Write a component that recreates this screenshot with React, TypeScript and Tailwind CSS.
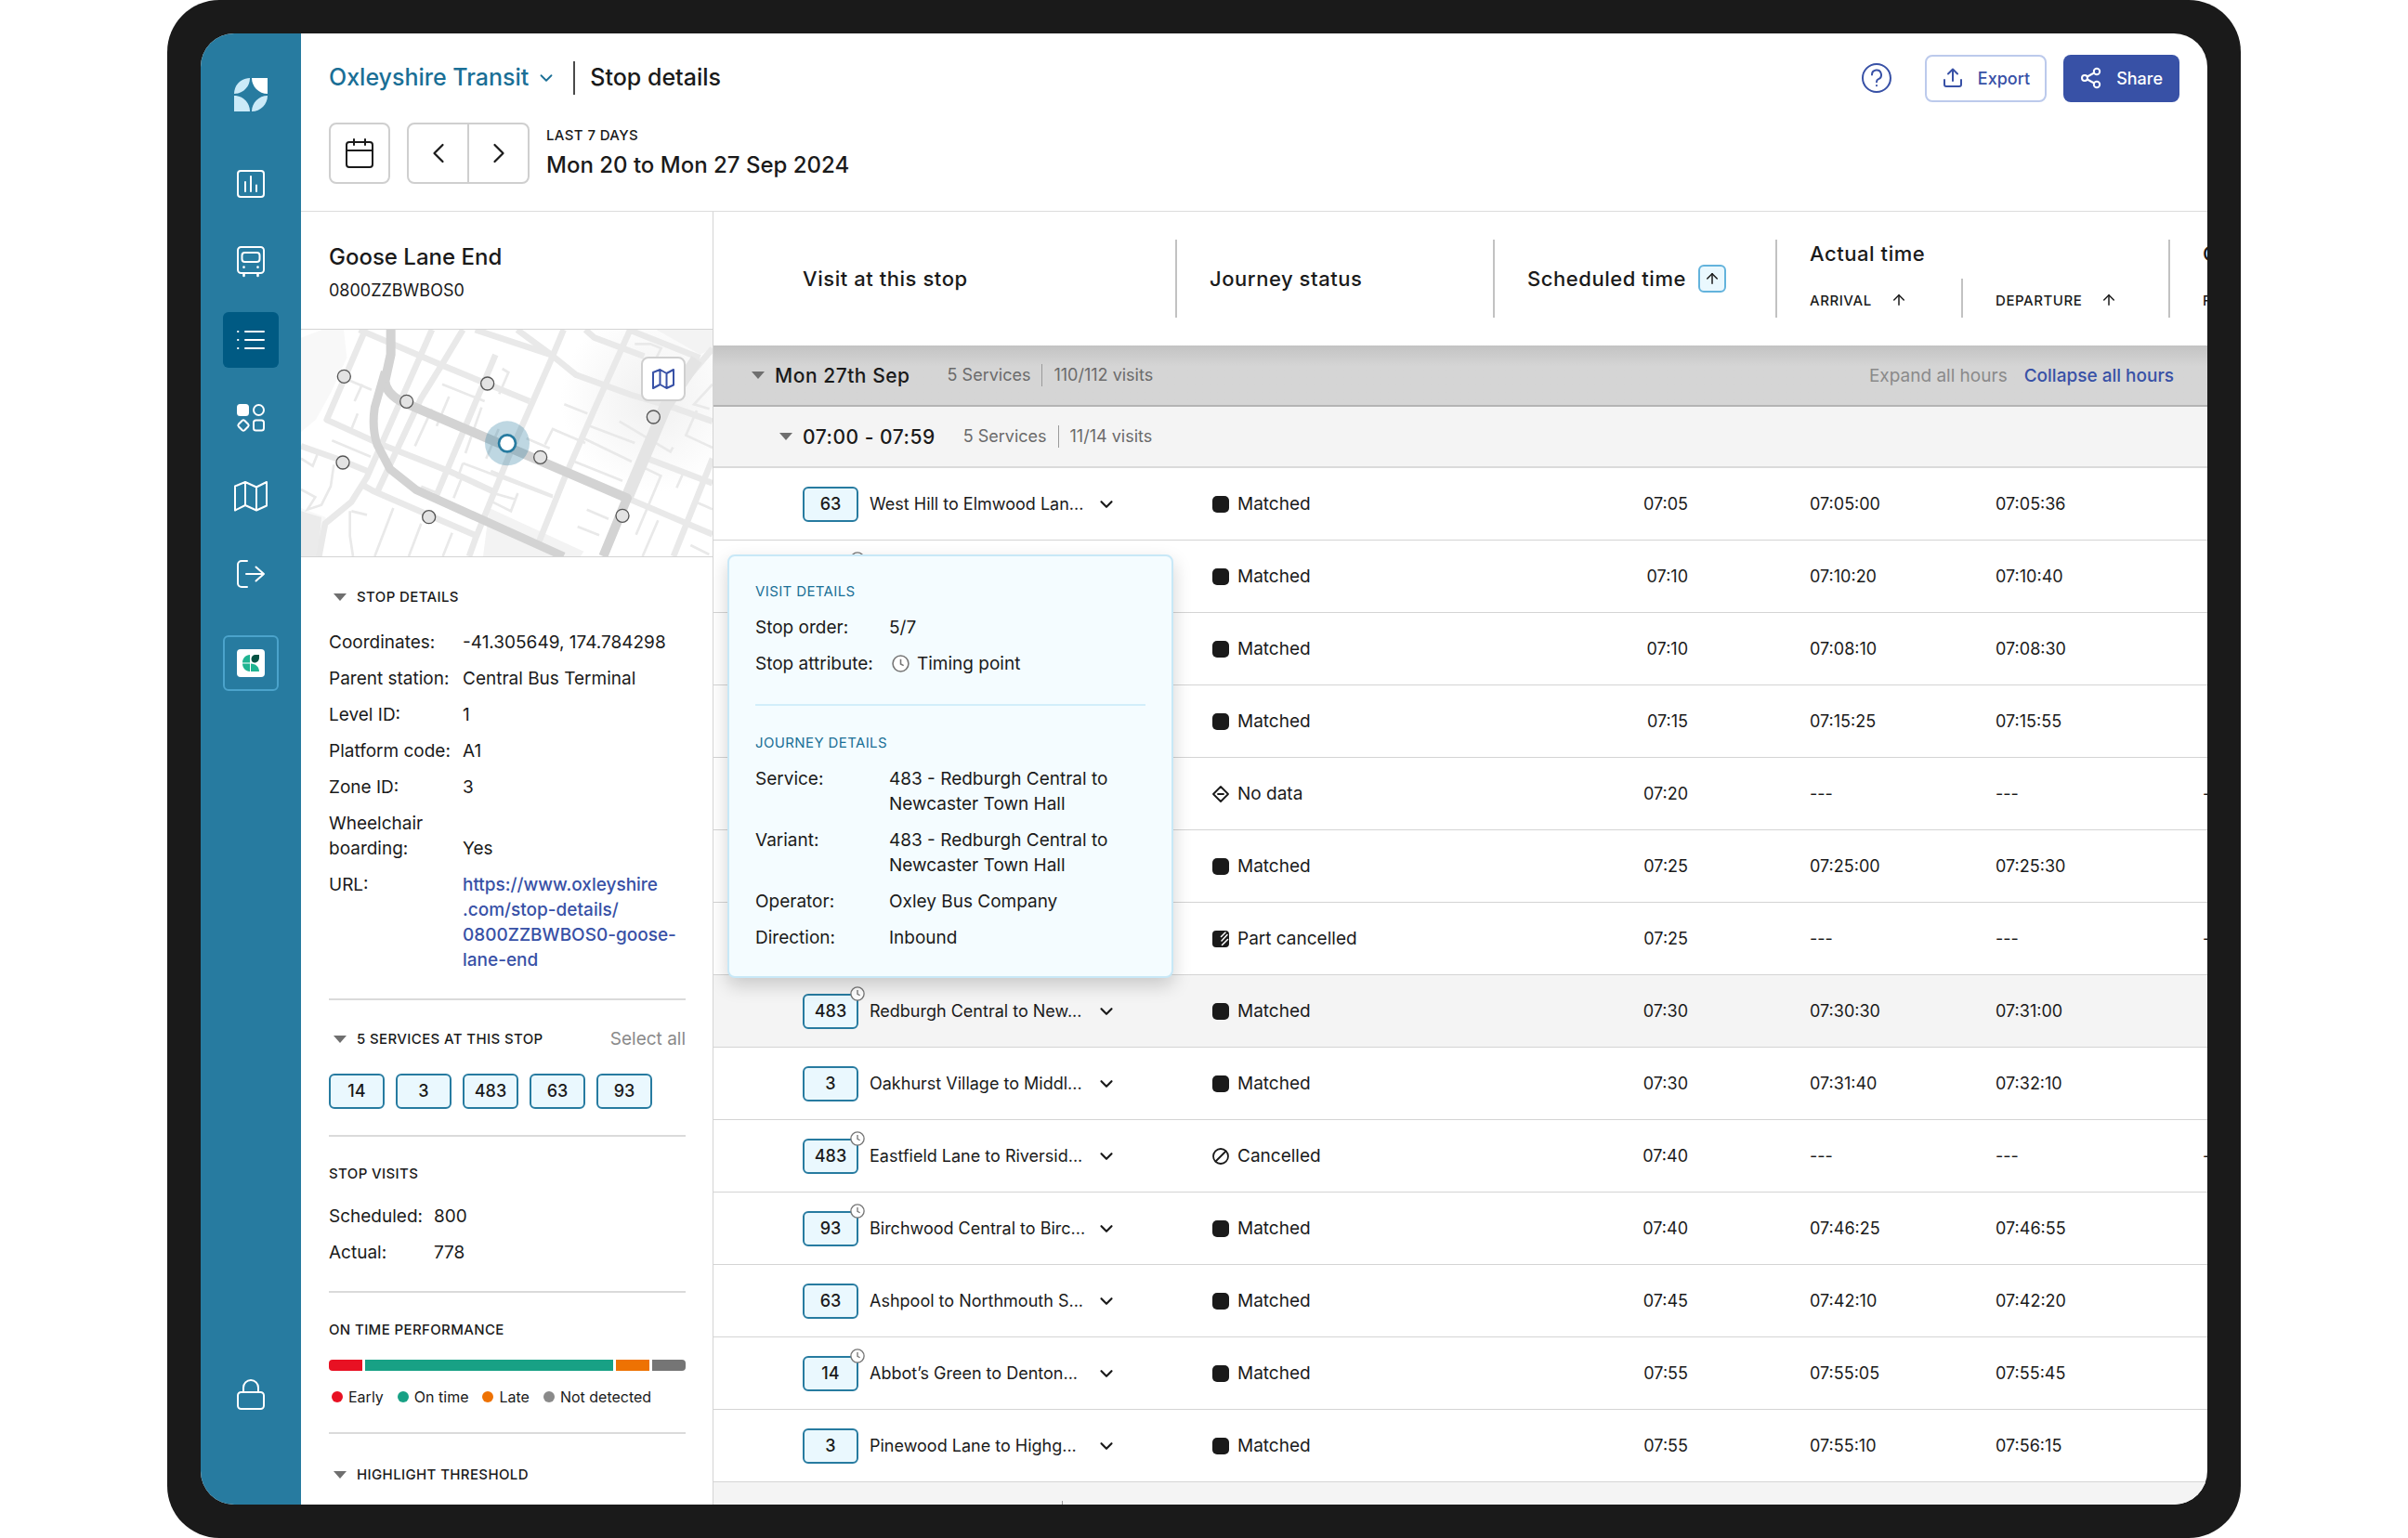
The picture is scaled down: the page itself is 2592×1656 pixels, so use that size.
import { ReactNode } from "react";
import { ArrowUp, ChevronDown, ChevronLeft, ChevronRight } from "lucide-react";
import clsx from "clsx";

type Status = "Matched" | "No data" | "Part cancelled" | "Cancelled";

interface Visit {
  service: string;
  name: string;
  timing?: boolean;
  status: Status;
  scheduled: string;
  arrival: string;
  departure: string;
  selected?: boolean;
}

const NONE = "---";

const VISITS: Visit[] = [
  { service: "63", name: "West Hill to Elmwood Lan...", status: "Matched", scheduled: "07:05", arrival: "07:05:00", departure: "07:05:36" },
  { service: "483", name: "Redburgh Central to New...", timing: true, status: "Matched", scheduled: "07:10", arrival: "07:10:20", departure: "07:10:40" },
  { service: "93", name: "Birchwood Central to Birc...", status: "Matched", scheduled: "07:10", arrival: "07:08:10", departure: "07:08:30" },
  { service: "14", name: "Abbot’s Green to Denton...", status: "Matched", scheduled: "07:15", arrival: "07:15:25", departure: "07:15:55" },
  { service: "3", name: "Oakhurst Village to Middl...", status: "No data", scheduled: "07:20", arrival: NONE, departure: NONE },
  { service: "63", name: "Ashpool to Northmouth S...", status: "Matched", scheduled: "07:25", arrival: "07:25:00", departure: "07:25:30" },
  { service: "14", name: "Abbot’s Green to Denton...", status: "Part cancelled", scheduled: "07:25", arrival: NONE, departure: NONE },
  { service: "483", name: "Redburgh Central to New...", timing: true, status: "Matched", scheduled: "07:30", arrival: "07:30:30", departure: "07:31:00", selected: true },
  { service: "3", name: "Oakhurst Village to Middl...", status: "Matched", scheduled: "07:30", arrival: "07:31:40", departure: "07:32:10" },
  { service: "483", name: "Eastfield Lane to Riversid...", timing: true, status: "Cancelled", scheduled: "07:40", arrival: NONE, departure: NONE },
  { service: "93", name: "Birchwood Central to Birc...", timing: true, status: "Matched", scheduled: "07:40", arrival: "07:46:25", departure: "07:46:55" },
  { service: "63", name: "Ashpool to Northmouth S...", status: "Matched", scheduled: "07:45", arrival: "07:42:10", departure: "07:42:20" },
  { service: "14", name: "Abbot’s Green to Denton...", timing: true, status: "Matched", scheduled: "07:55", arrival: "07:55:05", departure: "07:55:45" },
  { service: "3", name: "Pinewood Lane to Highg...", status: "Matched", scheduled: "07:55", arrival: "07:55:10", departure: "07:56:15" },
];

const PERFORMANCE = [
  { label: "Early", share: 36, bar: "bg-[#e81123]", dot: "bg-[#e81123]" },
  { label: "On time", share: 267, bar: "bg-[#18a185]", dot: "bg-[#18a185]" },
  { label: "Late", share: 36, bar: "bg-[#ee7203]", dot: "bg-[#ee7203]" },
  { label: "Not detected", share: 36, bar: "bg-[#757575]", dot: "bg-[#8a8a8a]" },
];

function Logo() {
  return (
    <svg className="size-9" viewBox="0 0 36 36" aria-hidden="true">
      <path d="M0 17C0 7.600 7.600 0 17 0C17 9.400 9.400 17 0 17Z" fill="#cbeaf8" />
      <path d="M19 0H36V17C26.600 17 19 9.400 19 0Z" fill="#fff" />
      <path d="M0 19C9.400 19 17 26.600 17 36H0Z" fill="#cbeaf8" />
      <path d="M36 19C36 28.400 28.400 36 19 36C19 26.600 26.600 19 36 19Z" fill="#cbeaf8" />
    </svg>
  );
}

function NavIcon({ children }: { children: ReactNode }) {
  return (
    <svg className="size-9" viewBox="-3 -3 36 36" fill="none" stroke="currentColor" strokeWidth="2" strokeLinecap="round" strokeLinejoin="round" aria-hidden="true">
      {children}
    </svg>
  );
}

const NAV = [
  {
    label: "Reports",
    icon: (
      <>
        <rect x="1" y="1" width="28" height="28" rx="3" />
        <path d="M9 13v10M15 7v16M21 16.500v6.500" />
      </>
    ),
  },
  {
    label: "Vehicles",
    icon: (
      <>
        <rect x="1" y="-1" width="28" height="28" rx="3.500" />
        <rect x="5.500" y="5" width="19" height="10" rx="3" />
        <path d="M7.500 20.500v.3M22.500 20.500v.3M7.500 28v2M22.500 28v2" strokeWidth="2.600" />
      </>
    ),
  },
  {
    label: "Stops",
    active: true,
    icon: <path d="M1 6h.4M1 15h.4M1 24h.4M9 6h20M9 15h20M9 24h20" />,
  },
  {
    label: "Status",
    icon: (
      <>
        <rect x="1" y="1" width="11" height="11" rx="2.500" fill="currentColor" />
        <circle cx="23.500" cy="6.500" r="5.500" />
        <path d="M5.800 17.800a1.800 1.800 0 0 1 2.400 0l4 4a1.800 1.800 0 0 1 0 2.400l-4 4a1.800 1.800 0 0 1-2.400 0l-4-4a1.800 1.800 0 0 1 0-2.400z" />
        <rect x="18" y="17.500" width="11" height="11" rx="2.500" />
      </>
    ),
  },
  {
    label: "Map",
    icon: <path d="M-2 4.500L9 0L21 5.500L32 0V25.500L21 30.500L9 25L-2 30.500ZM9 0V25M21 5.500V30.500" />,
  },
  {
    label: "Exit",
    icon: <path d="M11 1H5a4 4 0 0 0-4 4v20a4 4 0 0 0 4 4h6M10 15h19M20.500 7.500L29 15l-8.500 7.500" />,
  },
];

function Sidebar() {
  return (
    <nav aria-label="Main" className="flex w-27 shrink-0 flex-col items-center bg-[#277ba0] pt-12 pb-25 text-white">
      <Logo />
      <div className="mt-12 flex flex-col gap-6">
        {NAV.map((item) => (
          <button
            key={item.label}
            type="button"
            aria-label={item.label}
            className={clsx("flex size-15 items-center justify-center rounded-md", item.active && "bg-[#005a83]")}
          >
            <NavIcon>{item.icon}</NavIcon>
          </button>
        ))}
      </div>
      <button type="button" aria-label="Switch product" className="mt-9 flex size-15 items-center justify-center rounded-md border-2 border-[#4ba3cb]">
        <svg className="size-[30px]" viewBox="0 0 30 30" aria-hidden="true">
          <rect width="30" height="30" rx="4" fill="#fff" />
          <path d="M14 6v8.500H6C6 10 9.500 6 14 6ZM6 15.500h8V24C9.500 24 6 20 6 15.500ZM15 15.500c5 0 9 3.500 9 8.500h-9Z" fill="#1fb491" />
          <path d="M24 6v3c0 3-2 5.500-5 5.500-2 0-3.500-1.500-3.500-4C15.500 8 17.500 6 20 6Z" fill="#045243" />
        </svg>
      </button>
      <button type="button" aria-label="Lock" className="mt-auto">
        <NavIcon>
          <rect x="1" y="12" width="28" height="18" rx="3.500" />
          <path d="M7 12V7a8 8 0 0 1 16 0v5" />
        </NavIcon>
      </button>
    </nav>
  );
}

function Header() {
  return (
    <header className="border-b border-[#dcdcdc] px-[30px] pt-[22px] pb-[29px]">
      <div className="flex h-[52px] items-center">
        <button type="button" className="flex items-center gap-2 text-[25px] font-medium text-[#1a6f96]">
          Oxleyshire Transit
          <ChevronDown className="size-[22px]" strokeWidth={2} />
        </button>
        <h1 className="ml-[18px] flex h-9 items-center border-l-2 border-[#4a4a4a] pl-4 text-[25px] font-medium">Stop details</h1>
        <button type="button" aria-label="Help" className="mr-9 ml-auto text-[#3851a6]">
          <svg className="size-8" viewBox="0 0 32 32" fill="none" stroke="currentColor" strokeWidth="2" strokeLinecap="round" strokeLinejoin="round">
            <circle cx="16" cy="16" r="15" />
            <path d="M11 12.500a5 5 0 1 1 7 4.600c-1.400.6-2 1.300-2 3.200M16 24v.2" />
          </svg>
        </button>
        <button type="button" className="mr-[18px] flex h-[51px] items-center gap-[15px] rounded-lg border-2 border-[#bccaec] px-4 text-[18px] font-medium text-[#3851a6]">
          <svg className="size-6" viewBox="0 0 24 24" fill="none" stroke="currentColor" strokeWidth="2" strokeLinecap="round" strokeLinejoin="round">
            <path d="M3 14v5a2 2 0 0 0 2 2h14a2 2 0 0 0 2-2v-5M12 15V2.500M7 7.500l5-5 5 5" />
          </svg>
          Export
        </button>
        <button type="button" className="flex h-[51px] items-center gap-[15px] rounded-lg bg-[#3851a6] px-[18px] text-[18px] font-medium text-white">
          <svg className="size-6" viewBox="0 0 24 24" fill="none" stroke="currentColor" strokeWidth="2" strokeLinecap="round">
            <circle cx="5" cy="12" r="3" />
            <circle cx="18" cy="5" r="3.200" />
            <circle cx="18" cy="19" r="3.200" />
            <path d="M7.800 10.500l7.300-4M7.800 13.500l7.300 4" />
          </svg>
          Share
        </button>
      </div>
      <div className="mt-[22px] flex">
        <button type="button" aria-label="Pick dates" className="flex size-[66px] items-center justify-center rounded-lg border-2 border-[#cfcfcf]">
          <svg className="size-8" viewBox="0 0 32 32" fill="none" stroke="currentColor" strokeWidth="2" strokeLinecap="round" strokeLinejoin="round">
            <rect x="2" y="4" width="28" height="27" rx="3" />
            <path d="M2 13h28M10 1v6M22 1v6" />
          </svg>
        </button>
        <div className="ml-[18px] flex h-[66px] w-33 divide-x-2 divide-[#cfcfcf] rounded-lg border-2 border-[#cfcfcf]">
          <button type="button" aria-label="Previous" className="flex flex-1 items-center justify-center">
            <ChevronLeft className="size-9" strokeWidth={1.500} />
          </button>
          <button type="button" aria-label="Next" className="flex flex-1 items-center justify-center">
            <ChevronRight className="size-9" strokeWidth={1.500} />
          </button>
        </div>
        <div className="ml-[18px] flex flex-col">
          <span className="text-[15px] leading-[27px] font-medium tracking-wide">LAST 7 DAYS</span>
          <span className="text-2xl leading-[38px] font-medium">Mon 20 to Mon 27 Sep 2024</span>
        </div>
      </div>
    </header>
  );
}

const STOPS = [
  [151, 165],
  [353, 246],
  [614, 188],
  [785, 426],
  [1150, 296],
  [147, 443],
  [425, 619],
  [1050, 615],
];

function StopMap() {
  return (
    <div className="relative border-y border-[#d4d4d4]">
      <svg className="h-[244px] w-full" viewBox="12 14 1329 732" preserveAspectRatio="xMidYMid slice" fill="none" role="img" aria-label="Map of nearby stops">
        <defs>
          <radialGradient id="shade" cx="1150" cy="240" r="300" gradientUnits="userSpaceOnUse">
            <stop offset="0" stopColor="#f0f0f0" />
            <stop offset="1" stopColor="#fff" />
          </radialGradient>
        </defs>
        <path d="M12 14h1329v732H12z" fill="url(#shade)" />
        <path d="M12 40L80 14h70l10 90-50 110-50 90-48 40zM12 590l80 30-20 126H12z" fill="#f8f8f8" />
        <path d="M1160 14h181v60l-40 20zM620 590l305 140-10 16H600z" fill="#f3f3f3" />
        <path d="M12 600l66 20-10 126H12z" fill="#ebebeb" />
        <g stroke="#e9e9e9" strokeWidth="8">
          <path d="M150 170l90 38M210 190l-25 55M195 285l-20 50M112 372l125 52M12 430l38 24 16-40M118 450l-10 70-30 60-45 15 25-40-46-25" />
          <path d="M490 230l-40 95M468 190l137 55M435 270l-55 120M595 265l-52 148M662 140l20 12-30 70M610 430l40-95M170 600v80l10 66M175 600l50 12M310 590l-60 156M400 640l-40 106M500 670l-30 76" />
          <path d="M400 520l60 25M505 558l30-75M535 445l-18 50M535 445l290 110M625 470l200 80M630 570l60 30 22-58M625 540l80 22M862 255l75 30M800 385l25-50 105 45M740 365l75 32M945 325l145 55M925 365l155 75M895 440l155 62M1040 310l165 98 8-14M1090 60h50l35 14-40 80" />
          <path d="M1120 460l54 26-80 190M1245 480l-20 45M935 595l70 30M905 650l70 28M1341 190l-60 65 50 15M1290 275l-35 80 86 40M1285 570l56 24M1165 630l-50 116M1270 710l60 30" />
        </g>
        <g stroke="#e9e9e9" strokeWidth="20" strokeLinejoin="round">
          <path d="M215 25L95 305L260 380L500 475L630 535M12 390L140 435L225 470M200 14L470 130L750 245" />
          <path d="M435 14L225 490L175 570L90 640L70 746M535 14L465 130L400 235L255 545M640 95L445 560M210 515L245 535L580 680" />
          <path d="M860 14L820 110L680 430L575 690L555 746M1075 14L960 270L860 500L780 700M575 14L820 95M710 14L820 95L900 160L1080 225L1200 260L1341 310" />
          <path d="M930 14L960 40L1120 100M1070 14L1300 105M1341 75L1260 170M1130 430L1341 510M1341 430L1215 746M1070 560L1341 675" />
        </g>
        <path d="M1290 110L1190 260L1065 555" stroke="#e4e4e4" strokeWidth="40" />
        <g stroke="#d3d3d3" strokeLinejoin="round">
          <path d="M302 14v80L283 180Q285 215 330 243L1065 558L988 746" strokeWidth="30" />
          <path d="M283 150L250 265Q240 330 258 385L300 465L385 532L860 746" strokeWidth="27" />
        </g>
        {STOPS.map(([x, y]) => (
          <circle key={`${x}-${y}`} cx={x} cy={y} r="21" fill="#e3e3e3" stroke="#555" strokeWidth="4" />
        ))}
        <circle cx="678" cy="381" r="72" fill="#277ba0" fillOpacity=".3" />
        <circle cx="678" cy="381" r="27" fill="#fff" stroke="#277ba0" strokeWidth="8" />
      </svg>
      <button type="button" aria-label="Open map" className="absolute top-[29px] right-[29px] flex size-12 items-center justify-center rounded-lg border-2 border-[#cfcfcf] bg-white text-[#3851a6]">
        <svg className="size-6" viewBox="0 0 24 24" fill="none" stroke="currentColor" strokeWidth="2" strokeLinejoin="round">
          <path d="M1 5L8.500 2L15.500 6L23 2V18.500L15.500 22L8.500 18L1 22ZM8.500 2V18M15.500 6V22" />
        </svg>
      </button>
    </div>
  );
}

function Triangle() {
  return (
    <svg className="h-2 w-3.5 shrink-0 text-[#6f6f6f]" viewBox="0 0 14 8" aria-hidden="true">
      <path d="M0 0h14L7 8z" fill="currentColor" />
    </svg>
  );
}

function SectionTitle({ children, collapsible }: { children: ReactNode; collapsible?: boolean }) {
  return (
    <h3 className="text-[15px] leading-6 font-medium tracking-wide">
      {collapsible ? (
        <button type="button" className="flex items-center gap-[11px] pl-[5px]">
          <Triangle />
          {children}
        </button>
      ) : (
        children
      )}
    </h3>
  );
}

function ServiceChip({ children, timing }: { children: ReactNode; timing?: boolean }) {
  return (
    <button type="button" className="relative flex h-[38px] w-15 shrink-0 items-center justify-center rounded-md border-2 border-[#277ba0] bg-[#eaf8fe] text-lg font-medium">
      {children}
      {timing && <ClockIcon className="absolute -top-[10px] -right-[9px] size-4" />}
    </button>
  );
}

function ClockIcon({ className }: { className: string }) {
  return (
    <svg className={className} viewBox="0 0 18 18" fill="none" stroke="#767676" strokeWidth="1.500" aria-hidden="true">
      <circle cx="9" cy="9" r="8" fill="#fff" />
      <path d="M9 4.500V9.500L12 11" />
    </svg>
  );
}

const DETAILS = [
  ["Coordinates:", "-41.305649, 174.784298"],
  ["Parent station:", "Central Bus Terminal"],
  ["Level ID:", "1"],
  ["Platform code:", "A1"],
  ["Zone ID:", "3"],
  ["Wheelchair boarding:", "Yes"],
];

function StopPanel() {
  return (
    <aside className="flex w-111 shrink-0 flex-col overflow-hidden border-r border-[#d4d4d4]">
      <div className="px-[30px] pt-[31px] pb-[27px]">
        <h2 className="text-2xl leading-9 font-medium">Goose Lane End</h2>
        <p className="mt-1 text-[18px] leading-7">0800ZZBWBOS0</p>
      </div>
      <StopMap />
      <div className="divide-y-2 divide-[#dadada] pr-[29px] pl-[30px] text-[19px] leading-[27px]">
        <section className="pt-[31px] pb-7">
          <SectionTitle collapsible>STOP DETAILS</SectionTitle>
          <dl className="mt-[23px] grid grid-cols-[132px_1fr] gap-x-3 gap-y-3">
            {DETAILS.map(([term, value]) => (
              <div key={term} className="col-span-2 grid grid-cols-subgrid items-end">
                <dt>{term}</dt>
                <dd>{value}</dd>
              </div>
            ))}
            <dt>URL:</dt>
            <dd>
              <a href="#stop" className="font-medium text-[#3851a6]">
                https://www.oxleyshire
                <br />
                .com/stop-details/
                <br />
                0800ZZBWBOS0-goose-
                <br />
                lane-end
              </a>
            </dd>
          </dl>
        </section>
        <section className="pt-7 pb-7">
          <div className="flex items-center justify-between">
            <SectionTitle collapsible>5 SERVICES AT THIS STOP</SectionTitle>
            <button type="button" className="text-[19px] text-[#8a8a8a]">Select all</button>
          </div>
          <div className="mt-6 flex gap-3">
            {["14", "3", "483", "63", "93"].map((service) => (
              <ServiceChip key={service}>{service}</ServiceChip>
            ))}
          </div>
        </section>
        <section className="pt-7 pb-7">
          <SectionTitle>STOP VISITS</SectionTitle>
          <dl className="mt-5 grid grid-cols-[101px_1fr] gap-x-3 gap-y-3">
            <dt>Scheduled:</dt>
            <dd>800</dd>
            <dt>Actual:</dt>
            <dd>778</dd>
          </dl>
        </section>
        <section className="pt-7 pb-[26px]">
          <SectionTitle>ON TIME PERFORMANCE</SectionTitle>
          <div className="mt-5 flex h-3 gap-[3px] overflow-hidden rounded-sm">
            {PERFORMANCE.map((item) => (
              <div key={item.label} className={item.bar} style={{ flexGrow: item.share }} />
            ))}
          </div>
          <ul className="mt-4 flex gap-[15px] pl-[3px] text-[16px] leading-6">
            {PERFORMANCE.map((item) => (
              <li key={item.label} className="flex items-center gap-1.5 whitespace-nowrap">
                <span className={clsx("size-3 rounded-full", item.dot)} />
                {item.label}
              </li>
            ))}
          </ul>
        </section>
        <section className="py-8">
          <SectionTitle collapsible>HIGHLIGHT THRESHOLD</SectionTitle>
        </section>
      </div>
    </aside>
  );
}

function StatusIcon({ status }: { status: Status }) {
  return (
    <svg className="size-[18px]" viewBox="0 0 18 18" fill="none" stroke="#1a1a1a" strokeWidth="1.800" strokeLinecap="round" strokeLinejoin="round" aria-hidden="true">
      {status === "Matched" && <rect width="18" height="18" rx="5" fill="#1a1a1a" stroke="none" />}
      {status === "No data" && <path d="M9 1L17 9L9 17L1 9ZM6 9h6" />}
      {status === "Cancelled" && (
        <>
          <circle cx="9" cy="9" r="8" />
          <path d="M3.500 14.500l11-11" />
        </>
      )}
      {status === "Part cancelled" && (
        <>
          <rect width="18" height="18" rx="4" fill="#1a1a1a" stroke="none" />
          <path d="M9.500 6.500L14 2M10 11l6-6.500M10.500 15.500l6-6" stroke="#fff" strokeWidth="1.500" />
        </>
      )}
    </svg>
  );
}

function VisitPopover() {
  return (
    <div role="dialog" aria-label="Visit details" className="absolute bottom-[74px] left-[15px] z-10 w-[480px] rounded-lg border-2 border-[#c8e8f7] bg-[#f4fcff] px-7 pt-[26px] pb-7 text-[19px] leading-[27px] whitespace-nowrap shadow-[0_8px_20px_rgba(0,0,0,0.18)]">
      <h4 className="text-[15px] leading-6 tracking-wide text-[#1a6f96]">VISIT DETAILS</h4>
      <dl className="mt-[13px] grid grid-cols-[132px_1fr] gap-x-3 gap-y-3">
        <dt>Stop order:</dt>
        <dd>5/7</dd>
        <dt>Stop attribute:</dt>
        <dd className="flex items-center gap-2 pl-[3px]">
          <ClockIcon className="size-[19px]" />
          Timing point
        </dd>
      </dl>
      <hr className="mt-[30px] mb-7 border-t-2 border-[#d2eefa]" />
      <h4 className="text-[15px] leading-6 tracking-wide text-[#1a6f96]">JOURNEY DETAILS</h4>
      <dl className="mt-[13px] grid grid-cols-[132px_1fr] gap-x-3 gap-y-3">
        <dt>Service:</dt>
        <dd>
          483 - Redburgh Central to
          <br />
          Newcaster Town Hall
        </dd>
        <dt>Variant:</dt>
        <dd>
          483 - Redburgh Central to
          <br />
          Newcaster Town Hall
        </dd>
        <dt>Operator:</dt>
        <dd>Oxley Bus Company</dd>
        <dt>Direction:</dt>
        <dd>Inbound</dd>
      </dl>
    </div>
  );
}

function GroupSummary({ services, visits }: { services: string; visits: string }) {
  return (
    <span className="flex items-center text-lg text-[#6b6b6b]">
      {services}
      <span className="mx-3 h-6 w-px bg-[#9a9a9a]" />
      {visits}
    </span>
  );
}

function HourRow({ hour, services, visits }: { hour: string; services: string; visits: string }) {
  return (
    <tr>
      <td colSpan={6} className="h-[66px] border-b-2 border-[#dadada] bg-[#f4f4f4] p-0">
        <div className="flex items-center pl-[71px]">
          <button type="button" className="mr-[30px] flex items-center gap-[11px] text-[21px] font-medium tracking-wide">
            <Triangle />
            {hour}
          </button>
          <GroupSummary services={services} visits={visits} />
        </div>
      </td>
    </tr>
  );
}

function VisitRow({ visit }: { visit: Visit }) {
  return (
    <tr className={clsx("h-[78px]", visit.selected && "bg-[#f4f4f4]")}>
      <td className="border-b border-[#d4d4d4] p-0">
        <div className="relative flex h-[77px] items-center pl-24">
          <ServiceChip timing={visit.timing}>{visit.service}</ServiceChip>
          <span className="ml-3 w-[244px] whitespace-nowrap">{visit.name}</span>
          <button type="button" aria-label="Show journey">
            <ChevronDown className="size-[22px]" strokeWidth={2.400} />
          </button>
          {visit.selected && <VisitPopover />}
        </div>
      </td>
      <td className="border-b border-[#d4d4d4] p-0 pl-10 text-[19px]">
        <div className="flex items-center gap-[9px]">
          <StatusIcon status={visit.status} />
          {visit.status}
        </div>
      </td>
      <td className="border-b border-[#d4d4d4] p-0 pr-[94px] text-right">{visit.scheduled}</td>
      <td className="border-b border-[#d4d4d4] p-0 pl-[37px]">{visit.arrival}</td>
      <td className="border-b border-[#d4d4d4] p-0 pl-[37px]">{visit.departure}</td>
      <td className="overflow-hidden border-b border-[#d4d4d4] p-0 pl-[37px] whitespace-nowrap">{visit.arrival === NONE && NONE}</td>
    </tr>
  );
}

function VisitsTable() {
  return (
    <div className="min-w-0 flex-1 overflow-hidden">
      <table className="w-full table-fixed border-separate border-spacing-0 text-left text-[18px] leading-[27px]">
        <colgroup>
          <col className="w-[497px]" />
          <col className="w-[342px]" />
          <col className="w-[304px]" />
          <col className="w-[200px]" />
          <col className="w-[223px]" />
          <col />
        </colgroup>
        <thead className="text-[22px] tracking-wide">
          <tr className="h-[72px]">
            <th rowSpan={2} className="p-0 pl-24 font-medium">Visit at this stop</th>
            <th rowSpan={2} className="p-0 font-medium">
              <div className="flex h-21 items-center border-l-2 border-[#c2c2c2] pl-[35px]">Journey status</div>
            </th>
            <th rowSpan={2} className="p-0 font-medium">
              <div className="flex h-21 items-center gap-[13px] border-l-2 border-[#c2c2c2] pl-[35px]">
                Scheduled time
                <button type="button" aria-label="Sort by scheduled time" className="flex size-[30px] items-center justify-center rounded-md border-2 border-[#63b3dc] bg-[#eaf8fe]">
                  <ArrowUp className="size-[18px]" />
                </button>
              </div>
            </th>
            <th colSpan={2} className="p-0 pt-[30px] align-top font-medium">
              <div className="h-[42px] border-l-2 border-[#c2c2c2] pl-[35px] leading-[30px]">Actual time</div>
            </th>
            <th className="overflow-hidden p-0 pt-[30px] align-top font-medium whitespace-nowrap">
              <div className="h-[42px] border-l-2 border-[#c2c2c2] pl-[35px] leading-[30px]">Observed time</div>
            </th>
          </tr>
          <tr className="h-[72px] text-[15px]">
            <th className="p-0 pb-[30px] font-medium">
              <div className="flex h-[42px] items-center gap-5 border-l-2 border-[#c2c2c2] pt-1 pl-[35px]">
                ARRIVAL
                <ArrowUp className="size-[18px]" />
              </div>
            </th>
            <th className="p-0 pb-[30px] font-medium">
              <div className="flex h-[42px] items-center gap-5 border-l-2 border-[#c2c2c2] pt-1 pl-[35px]">
                DEPARTURE
                <ArrowUp className="size-[18px]" />
              </div>
            </th>
            <th className="overflow-hidden p-0 pb-[30px] font-medium">
              <div className="flex h-[42px] items-center border-l-2 border-[#c2c2c2] pt-1 pl-[35px]">FIRST</div>
            </th>
          </tr>
        </thead>
        <tbody>
          <tr>
            <td colSpan={6} className="h-[66px] border-b-2 border-[#b4b4b4] bg-linear-to-b from-[#c3c3c3] to-[#d5d5d5] to-35% p-0">
              <div className="flex items-center pr-9 pl-[41px]">
                <button type="button" className="mr-10 flex items-center gap-[11px] text-[21px] font-medium tracking-wide">
                  <Triangle />
                  Mon 27th Sep
                </button>
                <GroupSummary services="5 Services" visits="110/112 visits" />
                <button type="button" className="ml-auto text-[19px] text-[#8a8a8a]">Expand all hours</button>
                <button type="button" className="ml-[18px] text-[19px] font-medium text-[#3851a6]">Collapse all hours</button>
              </div>
            </td>
          </tr>
          <HourRow hour="07:00 - 07:59" services="5 Services" visits="11/14 visits" />
          {VISITS.map((visit, index) => (
            <VisitRow key={index} visit={visit} />
          ))}
          <HourRow hour="08:00 - 08:59" services="5 Services" visits="14/14 visits" />
        </tbody>
      </table>
    </div>
  );
}

function App() {
  return (
    <div className="h-screen bg-white px-45 font-['Inter','Liberation_Sans',sans-serif] text-[#1a1a1a]">
      <div className="h-full rounded-[56px] bg-[#1a1a1a] p-9">
        <div className="flex h-full overflow-hidden rounded-[36px] bg-white">
          <Sidebar />
          <div className="flex min-w-0 flex-1 flex-col">
            <Header />
            <main className="flex min-h-0 flex-1">
              <StopPanel />
              <VisitsTable />
            </main>
          </div>
        </div>
      </div>
    </div>
  );
}

export default App;
